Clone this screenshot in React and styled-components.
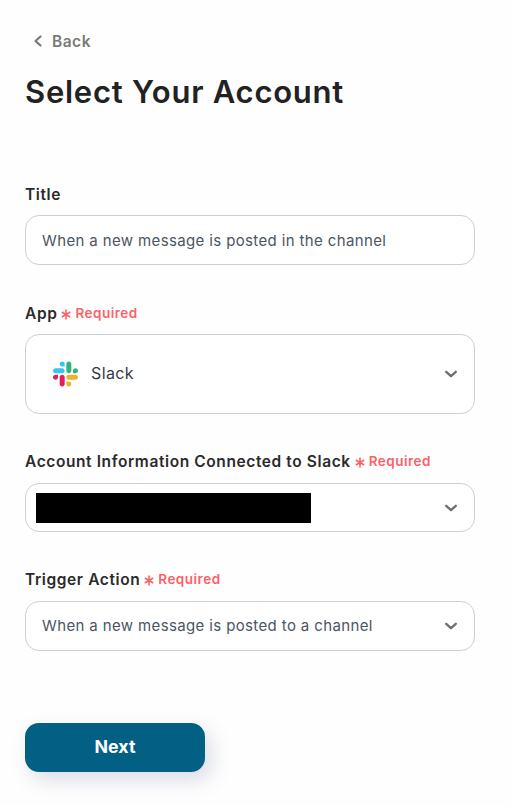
import React from "react";
import styled, { createGlobalStyle } from "styled-components";

const Global = createGlobalStyle`
  html, body { margin: 0; padding: 0; background: #fefefe; }
  body { font-family: Inter, "Liberation Sans", sans-serif; }
`;

const Page = styled.div`
  width: 511px;
  height: 805px;
  overflow: hidden;
  box-sizing: border-box;
  padding: 31px 36px 0 25px;
  display: flex;
  flex-direction: column;
`;

const BackLink = styled.a`
  display: flex;
  align-items: center;
  gap: 8px;
  height: 20px;
  padding-left: 7px;
  color: #7a7a7a;
  font-size: 15.5px;
  font-weight: 600;
  letter-spacing: 0.5px;
`;

const Title = styled.h1`
  margin: 18px 0 0;
  color: #222;
  font-size: 31px;
  line-height: 46px;
  font-weight: 600;
  letter-spacing: 0.75px;
`;

const Form = styled.div`
  margin-top: 69px;
  display: flex;
  flex-direction: column;
`;

const Field = styled.div`
  display: flex;
  flex-direction: column;
  margin-bottom: ${(p) => p.$gap}px;
`;

const LabelRow = styled.div`
  display: flex;
  align-items: center;
  height: 20px;
  margin-bottom: ${(p) => p.$gap}px;
`;

const Label = styled.label`
  color: #2a2a2a;
  font-size: 15.5px;
  font-weight: 600;
  letter-spacing: 0.6px;
`;

const Req = styled.span`
  display: flex;
  align-items: center;
  margin-left: 4px;
  color: #fb6268;
  font-size: 13.5px;
  font-weight: 600;
  letter-spacing: 0.5px;
  gap: 4px;
`;

const Box = styled.div`
  box-sizing: border-box;
  height: ${(p) => p.$h}px;
  border: 1px solid #cdced8;
  border-radius: 14px;
  background: #fff;
  display: flex;
  align-items: center;
  padding: 0 15px 0 16px;
  color: #4b5563;
  font-size: 15px;
  letter-spacing: 0.37px;
`;

const Value = styled.span`
  flex: 1;
  white-space: nowrap;
  padding-bottom: ${(p) => p.$lift || 0}px;
`;

const AppValue = styled.span`
  flex: 1;
  display: flex;
  align-items: center;
  gap: 13px;
  padding-left: 11px;
  color: #333a45;
  font-size: 16px;
  letter-spacing: 0.4px;
`;

const AppName = styled.span`
  padding-bottom: 2px;
`;

const Mask = styled.div`
  width: 275px;
  height: 30px;
  margin: 1px 0 0 -6px;
  background: #000;
`;

const NextButton = styled.button`
  width: 180px;
  height: 49px;
  margin-top: 72px;
  padding: 0 0 2px;
  border: 0;
  border-radius: 14px;
  background: #026085;
  color: #fff;
  font-family: inherit;
  font-size: 17.8px;
  font-weight: 700;
  box-shadow: 6px 8px 20px rgba(90, 100, 140, 0.22);
`;

const Chevron = () => (
  <svg width="16" height="16" viewBox="0 0 16 16" fill="none">
    <path d="M3.2 5.8 8 10.2 12.8 5.8" stroke="#6f6f6f" strokeWidth="2.3" strokeLinecap="round" strokeLinejoin="round" />
  </svg>
);

const Asterisk = () => (
  <svg width="10" height="11" viewBox="0 0 10 11" fill="none" style={{ marginTop: 3 }}>
    <path d="M5 .5v10M.8 3 9.2 8M9.2 3 .8 8" stroke="#fb6268" strokeWidth="1.6" />
  </svg>
);

const Back = () => (
  <svg width="12" height="14" viewBox="0 0 12 14" fill="none">
    <path d="M8.5 2.5 3.5 7l5 4.5" stroke="#7a7a7a" strokeWidth="2.3" strokeLinecap="round" strokeLinejoin="round" />
  </svg>
);

const SlackLogo = () => (
  <svg width="25" height="26" viewBox="0 0 2447.6 2452.5">
    <path fill="#36c5f0" d="m897.4 0c-135.3.1-244.8 109.9-244.7 245.2-.1 135.3 109.5 245.1 244.8 245.2h244.8v-245.1c.1-135.3-109.5-245.1-244.9-245.3.1 0 .1 0 0 0m0 654h-652.6c-135.3.1-244.9 109.9-244.8 245.2-.2 135.3 109.4 245.1 244.7 245.3h652.7c135.3-.1 244.9-109.9 244.8-245.2.1-135.4-109.5-245.2-244.8-245.3z" />
    <path fill="#2eb67d" d="m2447.6 899.2c.1-135.3-109.5-245.1-244.8-245.2-135.3.1-244.9 109.9-244.8 245.2v245.3h244.8c135.3-.1 244.9-109.9 244.8-245.3zm-652.7 0v-654c.1-135.2-109.4-245-244.7-245.2-135.3.1-244.9 109.9-244.8 245.2v654c-.2 135.3 109.4 245.1 244.7 245.3 135.3-.1 244.9-109.9 244.8-245.3z" />
    <path fill="#ecb22e" d="m1550.1 2452.5c135.3-.1 244.9-109.9 244.8-245.2.1-135.3-109.5-245.1-244.8-245.2h-244.8v245.2c-.1 135.2 109.5 245 244.8 245.2zm0-654.1h652.7c135.3-.1 244.9-109.9 244.8-245.2.2-135.3-109.4-245.1-244.7-245.3h-652.7c-135.3.1-244.9 109.9-244.8 245.2-.1 135.4 109.4 245.2 244.7 245.3z" />
    <path fill="#e01e5a" d="m0 1553.2c-.1 135.3 109.5 245.1 244.8 245.2 135.3-.1 244.9-109.9 244.8-245.2v-245.2h-244.8c-135.3.1-244.9 109.9-244.8 245.2zm652.7 0v654c-.2 135.3 109.4 245.1 244.7 245.3 135.3-.1 244.9-109.9 244.8-245.2v-653.9c.2-135.3-109.4-245.1-244.7-245.3-135.4 0-244.8 109.8-244.8 245.1z" />
  </svg>
);

const Required = () => (
  <Req>
    <Asterisk />
    Required
  </Req>
);

export default function App() {
  return (
    <>
      <Global />
      <Page>
        <BackLink>
          <Back />
          Back
        </BackLink>
        <Title>Select Your Account</Title>
        <Form>
          <Field $gap={38}>
            <LabelRow $gap={11}>
              <Label>Title</Label>
            </LabelRow>
            <Box $h={50}>
              <Value>When a new message is posted in the channel</Value>
            </Box>
          </Field>
          <Field $gap={37}>
            <LabelRow $gap={11}>
              <Label>App</Label>
              <Required />
            </LabelRow>
            <Box $h={80}>
              <AppValue>
                <SlackLogo />
                <AppName>Slack</AppName>
              </AppValue>
              <Chevron />
            </Box>
          </Field>
          <Field $gap={37}>
            <LabelRow $gap={12}>
              <Label>Account Information Connected to Slack</Label>
              <Required />
            </LabelRow>
            <Box $h={49}>
              <Value>
                <Mask />
              </Value>
              <Chevron />
            </Box>
          </Field>
          <Field $gap={0}>
            <LabelRow $gap={12}>
              <Label>Trigger Action</Label>
              <Required />
            </LabelRow>
            <Box $h={50}>
              <Value $lift={2}>When a new message is posted to a channel</Value>
              <Chevron />
            </Box>
          </Field>
        </Form>
        <NextButton>Next</NextButton>
      </Page>
    </>
  );
}
